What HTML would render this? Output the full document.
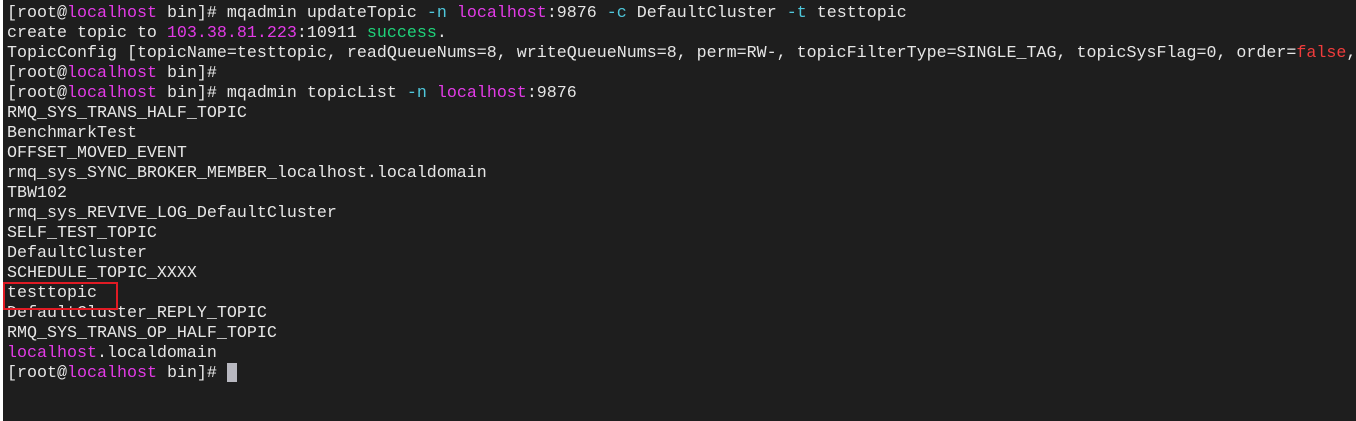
<!DOCTYPE html>
<html><head><meta charset="utf-8"><style>
html,body{margin:0;padding:0;background:#fff;}
.t{position:absolute;left:3px;top:0;width:1353px;height:421px;background:#1e1e1e;}
pre{margin:0;position:absolute;left:7px;top:4px;font-family:"Liberation Mono",monospace;font-size:16.66px;line-height:20px;color:#e6e6e6;white-space:pre;}
.m{color:#e23be6}.g{color:#1fd37a}.c{color:#4fc8dc}.r{color:#f03c3c}
.box{position:absolute;left:3px;top:282px;width:111px;height:24px;border:2px solid #e01b24;}
.cur{position:absolute;left:227px;top:363px;width:10px;height:19px;background:#b8b8c0;}
</style></head><body><div class="t"></div>
<pre>[root@<span class="m">localhost</span> bin]# mqadmin updateTopic <span class="c">-n</span> <span class="m">localhost</span>:9876 <span class="c">-c</span> DefaultCluster <span class="c">-t</span> testtopic
create topic to <span class="m">103.38.81.223</span>:10911 <span class="g">success</span>.
TopicConfig [topicName=testtopic, readQueueNums=8, writeQueueNums=8, perm=RW-, topicFilterType=SINGLE_TAG, topicSysFlag=0, order=<span class="r">false</span>,
[root@<span class="m">localhost</span> bin]#
[root@<span class="m">localhost</span> bin]# mqadmin topicList <span class="c">-n</span> <span class="m">localhost</span>:9876
RMQ_SYS_TRANS_HALF_TOPIC
BenchmarkTest
OFFSET_MOVED_EVENT
rmq_sys_SYNC_BROKER_MEMBER_localhost.localdomain
TBW102
rmq_sys_REVIVE_LOG_DefaultCluster
SELF_TEST_TOPIC
DefaultCluster
SCHEDULE_TOPIC_XXXX
testtopic
DefaultCluster_REPLY_TOPIC
RMQ_SYS_TRANS_OP_HALF_TOPIC
<span class="m">localhost</span>.localdomain
[root@<span class="m">localhost</span> bin]# </pre>
<div class="box"></div><div class="cur"></div>
</body></html>
